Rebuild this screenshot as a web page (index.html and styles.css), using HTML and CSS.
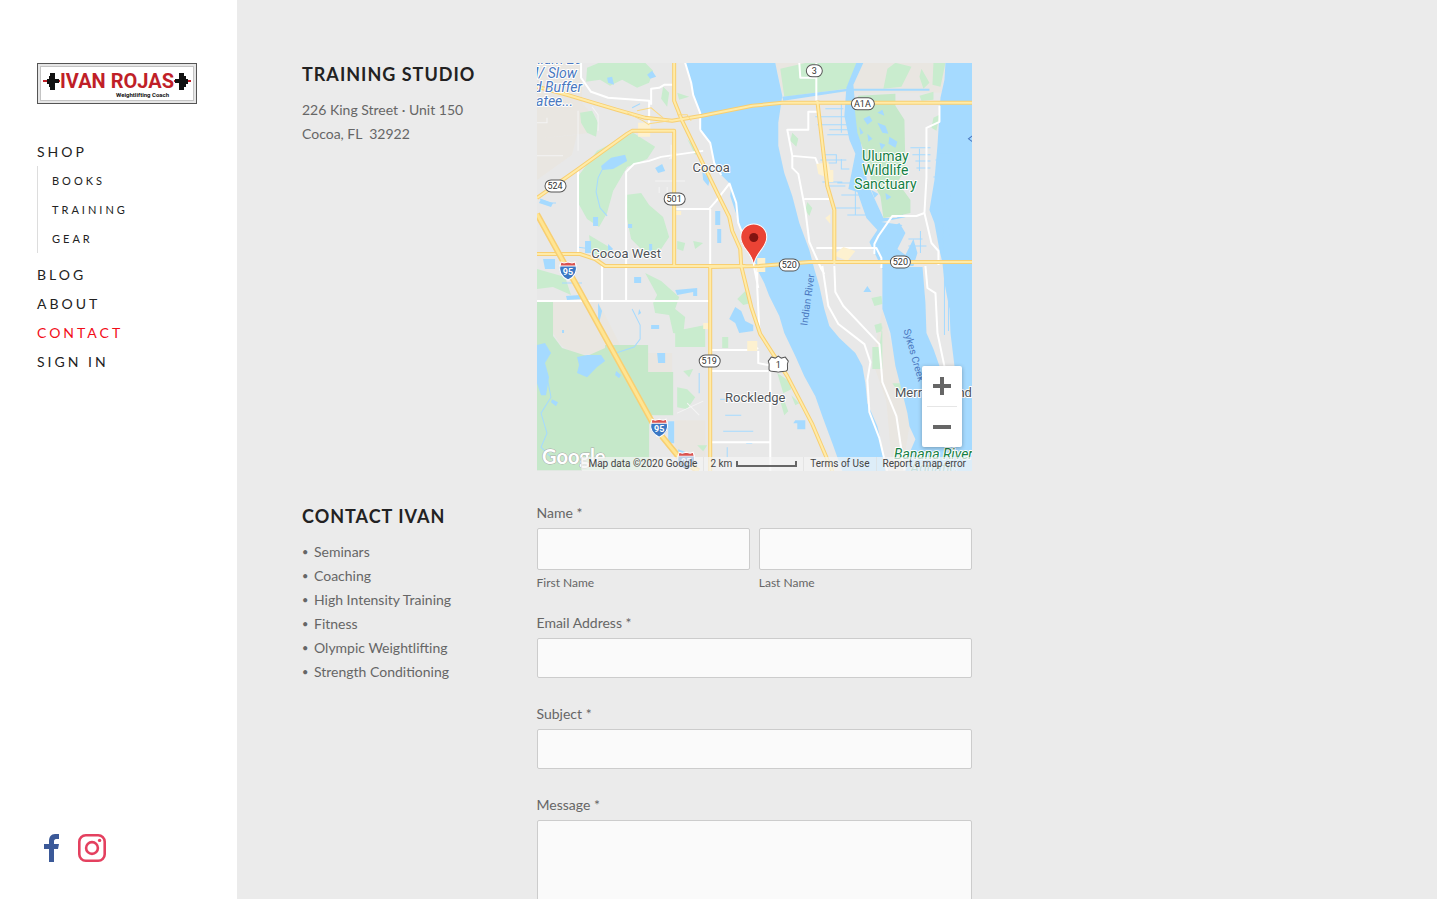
FILE: index.html
```html
<!DOCTYPE html>
<html lang="en">
<head>
  <meta charset="UTF-8">
  <meta name="viewport" content="width=device-width, initial-scale=1.0">
  <title>Contact - Ivan Rojas Weightlifting Coach</title>
  <link rel="stylesheet" href="styles.css">
</head>
<body>
  <header class="sidebar">
    <a href="#" class="logo" aria-label="Ivan Rojas Weightlifting Coach">
      <svg viewBox="0 0 160 41">
        <rect x="0.5" y="0.5" width="159" height="40" fill="#e6e6e6" stroke="#555"/>
        <rect x="3.5" y="3.5" width="153" height="34" fill="#fff" stroke="#c4c4c4"/>
        <path d="M6 18h17M137 18h17" stroke="#c01f28" stroke-width="2"/>
        <path d="M10 16h2v5h-2zM12 13h2v11h-2zM13 10h5v17h-5zM17 16h5v4h-5zM138 16h5v4h-5zM142 10h5v17h-5zM146 13h3v11h-3zM149 16h2v5h-2z" fill="#111"/>
        <text x="23" y="25" class="logo-name">IVAN ROJAS</text>
        <text x="79" y="34" class="logo-tag">Weightlifting Coach</text>
      </svg>
    </a>
    <nav>
      <ul class="menu">
        <li><a href="#">Shop</a>
          <ul class="submenu">
            <li><a href="#">Books</a></li>
            <li><a href="#">Training</a></li>
            <li><a href="#">Gear</a></li>
          </ul>
        </li>
        <li><a href="#">Blog</a></li>
        <li><a href="#">About</a></li>
        <li><a href="#" class="active">Contact</a></li>
        <li><a href="#">Sign In</a></li>
      </ul>
    </nav>
    <div class="social">
      <a href="#" aria-label="Facebook">
        <svg width="28" height="28" viewBox="0 0 28 28"><path d="M12 28V15H7v-5h5V7c0-4 2-7 6-7h4v5h-3c-1 0-2 1-2 2v3h5l-1 5h-4v13z" fill="#3b5998"/></svg>
      </a>
      <a href="#" aria-label="Instagram">
        <svg width="28" height="28" viewBox="0 0 28 28" fill="none" stroke="#e4405f" stroke-width="2.6"><rect x="1.3" y="1.3" width="25.4" height="25.4" rx="6.5"/><circle cx="14" cy="14" r="5.9"/><circle cx="21.6" cy="6.4" r="1.7" fill="#e4405f" stroke="none"/></svg>
      </a>
    </div>
  </header>

  <main>
    <div class="content">
      <section>
        <h2>Training Studio</h2>
        <p>226 King Street · Unit 150<br>Cocoa, FL&nbsp; 32922</p>
      </section>

      <div class="map">
        <svg class="map-canvas" viewBox="0 0 435 408" preserveAspectRatio="xMidYMid slice">
          <rect width="435" height="408" fill="#e8e8e8"/>
          <!-- bare land -->
          <g fill="#e9e6e1">
            <path d="M0 0h45v40l10 12v18L0 76zM0 76l40-4-5 20-35 25zM16 238l45 0 22 44-15 8-30 2-14-10-8-12zM238 0h170l-4 30H245zM111 290h24v26h-24zM138 357h30v40h-30zM345 246l28 110-8 52h-10l-6-70-14-40z"/>
          </g>
          <!-- parks and woods -->
          <g fill="#c9ecce">
            <path d="M50 5l12-5h46l8 8-4 12-12 5-15-8-12 6-10-6-14 2zM43 50l12-2 6 12-2 14-9-4-6-10zM60 88l36-18 22 14-8 12-20 8-14 24-6 22-8 14-12-8-10-18 2-26zM88 132l16-2 8 12 14 12 6 20-8 12-14 6-16-16-4-20zM126 24l6 6-2 14-6-8zM140 30l12 4-10 3zM150 76l12 14-4 2zM52 172l20 12-4 10-14-4zM140 178l8 2-2 8-6-2zM0 206l28 8 6 18-18-8-16 2zM108 210l16 8 18 16-4 12 10 8-2 18-10-2-4-18-14-2-2-10 4-8zM138 268l30-6v22h-30zM140 324l10 2 8 8-8 12-10-2zM160 382h10l-4 6zM185 274h6v11h-6zM146 308l10-2-4 8zM156 178l10 2-8 6z"/>
            <path d="M243 6l26-6h54l-14 26-62 8zM350 6l8-6 16 4-10 20-18 2zM384 6l8 14-6 6-4-12zM396 0h12l-5 24-8-2zM255 70l6 6-2 8-6-6zM270 139l5 6-3 8-4-6zM334 235l10-2 1 8-8 2zM337 262l7-2 1 8-6 2zM335 284v22h10v-44l-3 22zM240 310l12 8 2 8-8 4zM245 332l6 16-4 4-4-14zM382 33l14-4v8l-12 1zM396 55l6-3-3 16-5-3zM355 320l8 0 2 10-6-4zM200 236l8-8 6 12-8 2zM254 332l8 8-4 2z"/>
          </g>
          <path d="M0 239h16v34l9 12 25 8 18-8v-3h43v27h25v43h-24v55H0z" fill="#c5e8c9"/>
          <!-- rivers -->
          <g class="water">
            <path d="M148 0l6 20 2 12 7 18v17l10 13 3 17 6 13 12 12-1 11 9 27 6 20 7 17 12 23 5 13 10 20 5 17 11 23 9 20 11 20 7 20 10 27 10 28h43l-5-32-3-13-10-23-2-20-3-17-7-13-16-15-10-12-5-17-5-23-5-17-5-19-10-27-7-27-8-23-6-27V60l4-27-5-23-2-10z"/>
            <path d="M408 0l-1 17-4 18-3 48-3 34-5 30 5 13 5 27 3 13 2 20 5 26 1 24 4 33 5 20-3 30v55h16V0z"/>
            <path d="M345 203v43l8 24 5 33 7 27 5 20 2 13 6 13-6 14-4 18h67v-30l-27-20-6-55-6-17-7-16-1-30-3-37z"/>
            <path d="M319 0h7l-10 22 2 22 12 76 16 35h13l6-4 6 7v24l8 16v8h-34l-13-27 8-12-11-12-9-26-9-3 7-35-6-14-5-24 2-28z"/>
            <path d="M245 34l65-8h82v2h-80l-66 10z"/>
          </g>
          <path d="M317 43l4-10 37-2v12l9 14 1 50-8 12 13 18v13l-14 3-13 2-3-22-9-15-6-25-8-23z" fill="#c5e8c9"/>
          <g class="water">
            <path d="M326 56l6-3 3 5-5 4zM340 60l8 3 3 8-6-1zM330 71l5 5-4 3zM352 74l8 5-2 6-7-4zM322 64l4 6-3 2zM342 80l6 2-4 5zM334 127l7 4-4 4zM348 130l6 4-5 3zM340 50l5-3 2 6z"/>
          </g>
          <path d="M344 159l21 3-14 14 3 28h35l-8-24 3-24-10-3z" fill="#e8e8e8"/>
          <path d="M350 166l12-6 6 10-8 16 8 6 8-16 4 14-4 13h-22l-6-18z" class="water"/>
          <!-- lakes -->
          <g class="water">
            <path d="M64 103l10-8 14-3 2 6-14 8-11 1zM70 15l5-1 2 8-6-2zM110 12l5-4 4 6-6 2zM118 105l7-4 3 7-7 2zM165 108l8 8-2 7-5-6zM178 148h5v14h-5zM180 166h4v14h-4zM4 136l12 4-2 4-12-4zM6 196h12v10H8zM48 178h6v12h-6zM56 154h5v9h-5zM91 161h4v4h-4zM112 181h3v8h-3zM40 294l10-2 14 0 4 6-8 6-10 10-10-4 2-8zM79 308l5 4-2 3-4-3zM0 282l8-2 6 10-6 10 4 14-3 18H4L0 320zM15 336l6 3-2 4-5-4zM120 290h8v10h-7zM131 358h6v22h-6zM97 214h7v6h-7zM138 227l22-2v8h-4v-4l-16 3zM114 262h8v4h-8zM198 244l6 4 4 10 8 4v6l-14 2-4-10-6-4zM61 240l4 8-4 16zM102 246l2 4-3 2zM330 223l4 6h-8zM258 357h10v9h-8v-6h-4zM25 267h2v3h-2zM141 386l8 3v8h-8zM29 233l14-1 1 4-14 1zM71 181l5 5-5 4z"/>
          </g>
          <g class="creek">
            <path d="M67 103l-6 12-2 14 4 16 7 8M3 136l10 4 6 0M95 246l8 16 0 14-6 8-18 6M10 314l4 20-10 16 6 20-6 14 10 10M95 45l8-4M40 184l14 2M25 220h20"/>
            <path d="M288 46h18M278 54h31M280 62h30M292 67h22M290 72h25M304 40v30M283 97h26M285 92h14v8h-10v8M304 96v10h8M300 120h20M304 132h20M295 145h28M318 124v28M310 152h20M285 119h20M288 123h20"/>
            <path d="M373 85h20M375 92h18M378 98h15M379 105h14M382 86v22M400 90h12M398 97h16M396 114h26M397 121h12M395 133h18M395 140h12M398 147h14M399 155h13M401 165h10M402 172h10M406 161v30M371 176h14M371 183h18M383 168v22"/>
            <path d="M407 208v64M411 222v46M183 336h20M186 368h30M188 352h16M190 384v10M209 380h6M162 310v20"/>
          </g>
          <!-- local streets -->
          <g class="street">
            <path d="M44 0v15l10 14 17 6 41 3v28M114 42V26l8-1 5-3h10M41 107v84M89 204v-95l8-8 15-3 12-4 42-6M89 112v90M173 146v57M139 146h33l7-8 13-17M0 238h173M65 203v34M89 203v34M173 287h42l6-2M173 308h58M233 308v100M173 379h60M221 288v12l10 2h10M192 120l7 20 2 20 10 25 8 20M163 67l10 13 4 20 7 12M148 0l6 20 2 12 7 18v17M220 205v20l2 40M217 205l4 20"/>
            <path d="M279 0v38M262 0l1 15h16M280 49h-9v18h-21l5 26 0 12 6 6 7 36 4 32 12 27 3 5M255 93l23 2 4 10 8 3M267 136h25M279 185h60l5 10v10M402 43v16l-13 6v50l-2 35-8 3-24 0-14 20-4 8v10M387 150l7 30 7 8v14M285 203l6 40 10 18 26 20 6 18-3 18 2 32 10 26 8 34M297 203l1 26 8 14 36 38 3 38 14 34 8 54M388 203l2 22 8 5 2 40 8 38"/>
            <path d="M0 60h10v-5M41 48v40M55 44l6 8v16M118 118h30M122 124v6M130 124v8M0 93h26M140 350l26-12M150 340l12 12M134 82v14M140 90l-8 6" class="lane"/>
          </g>
          <g fill="#fdf1d0">
            <path d="M101 60h12v14h-12zM279 101l12-2 4 18-14-6zM291 107h5v12h-6zM136 148h8v4h-8zM288 155l5-4v10zM220 195h8v14h-8zM296 192l10-8 12 4-8 10zM166 260h8v6h-8zM210 278h10v10h-10z"/>
          </g>
          <!-- highways -->
          <g class="road-edge">
            <path d="M0 135l40-28 50-36 5-3h42v135M173 204v204"/>
            <path d="M137 0v38l8 20 35 72 12 24 3 14 8 18 1 17M204 203l10 41 9 27 27 42 25 48 20 47"/>
            <path d="M0 191h43l15 5 10 7h140M172 204l50-1 50-4h163"/>
            <path d="M280 38l10 85 7 24v54"/>
            <path d="M0 24l30 8 50 15 28 8 27 3 30-5 50-10 30-3h220"/>
          </g>
          <g class="road">
            <path d="M0 135l40-28 50-36 5-3h42v135M173 204v204"/>
            <path d="M137 0v38l8 20 35 72 12 24 3 14 8 18 1 17M204 203l10 41 9 27 27 42 25 48 20 47"/>
            <path d="M0 191h43l15 5 10 7h140M172 204l50-1 50-4h163"/>
            <path d="M280 38l10 85 7 24v54"/>
            <path d="M0 24l30 8 50 15 28 8 27 3 30-5 50-10 30-3h220"/>
          </g>
          <path d="M90 50l16 8 6 4M100 48l14-3 12 10M112 61l20-3M140 52l10 0 4 6" class="ramp"/>
          <path d="M0 151l31 56 88 159 22 27 20 15" class="freeway-edge"/>
          <path d="M0 151l31 56 88 159 22 27 20 15" class="freeway"/>
          <!-- route shields -->
          <g class="shield">
            <rect x="8" y="117" width="21" height="12" rx="6"/><text x="18" y="126">524</text>
            <rect x="127" y="130" width="21" height="12" rx="6"/><text x="137" y="139">501</text>
            <rect x="269" y="2" width="16" height="12" rx="6"/><text x="277" y="11">3</text>
            <rect x="314" y="35" width="23" height="12" rx="6"/><text x="325" y="44">A1A</text>
            <rect x="242" y="196" width="20" height="12" rx="6"/><text x="252" y="205">520</text>
            <rect x="353" y="193" width="20" height="12" rx="6"/><text x="363" y="202">520</text>
            <rect x="162" y="292" width="21" height="12" rx="6"/><text x="172" y="301">519</text>
            <path d="M234 294l4 1 3-2 3 2 4-1 3 4c-2 4 0 6-1 9-1 2-5 1-9 2-4-1-8 0-9-2-1-3 1-5-1-9z"/><text x="241" y="305">1</text>
          </g>
          <g class="interstate">
            <path d="M23 202h16c2 8-2 12-8 15-6-3-10-7-8-15z"/><path d="M24 199l3 1 4-1 4 1 3-1 1 4H23z" class="crest"/><text x="31" y="212">95</text>
            <path d="M114 359h16c2 8-2 12-8 15-6-3-10-7-8-15z"/><path d="M115 356l3 1 4-1 4 1 3-1 1 4h-16z" class="crest"/><text x="122" y="369">95</text>
            <path d="M141 392h16c2 8-2 12-8 15-6-3-10-7-8-15z"/><path d="M142 389l3 1 4-1 4 1 3-1 1 4h-16z" class="crest"/><text x="149" y="402">95</text>
          </g>
          <!-- place names -->
          <g class="place">
            <text x="174" y="109">Cocoa</text>
            <text x="89" y="195">Cocoa West</text>
            <text x="218" y="339">Rockledge</text>
            <text x="396" y="334">Merritt Island</text>
          </g>
          <g class="park-name">
            <text x="348" y="98">Ulumay</text>
            <text x="348" y="112">Wildlife</text>
            <text x="348" y="126">Sanctuary</text>
            <text x="396" y="396" class="aquatic">Banana River</text>
            <text x="396" y="410" class="aquatic faded">Aquatic</text>
          </g>
          <g class="water-name large">
            <text x="45" y="1">nium 20</text>
            <text x="40" y="15">M/ Slow</text>
            <text x="45" y="29">nd Buffer</text>
            <text x="36" y="43">Catee...</text>
          </g>
          <g class="water-name">
            <text transform="translate(270 263) rotate(-82)">Indian River</text>
            <text transform="translate(366 267) rotate(74)">Sykes Creek</text>
          </g>
          <path d="M435 73l-4 3 4 3" fill="none" stroke="#4a78c0"/>
          <!-- marker -->
          <path d="M216.500 203c-1-14-13-17-13-29a13 13 0 0 1 26 0c0 12-12 15-13 29z" fill="#ea4335" stroke="#fff" stroke-width="1"/>
          <circle cx="216.500" cy="174.500" r="4.500" fill="#811411"/>
          <text x="5" y="401" class="google">Google</text>
        </svg>
        <div class="zoom">
          <button type="button" aria-label="Zoom in"><svg width="18" height="18" viewBox="0 0 18 18"><path d="M7 0h4v7h7v4h-7v7H7v-7H0V7h7z"/></svg></button>
          <button type="button" aria-label="Zoom out"><svg width="18" height="18" viewBox="0 0 18 18"><path d="M0 7h18v4H0z"/></svg></button>
        </div>
        <div class="credits">
          <span>Map data ©2020 Google</span>
          <span class="scale">2 km <i></i></span>
          <a href="#">Terms of Use</a>
          <a href="#">Report a map error</a>
        </div>
      </div>

      <section>
        <h2>Contact Ivan</h2>
        <ul class="services">
          <li>Seminars</li>
          <li>Coaching</li>
          <li>High Intensity Training</li>
          <li>Fitness</li>
          <li>Olympic Weightlifting</li>
          <li>Strength Conditioning</li>
        </ul>
      </section>

      <form>
        <fieldset class="name-group">
          <legend>Name *</legend>
          <div class="names">
            <div class="name">
              <input type="text" id="fname">
              <label for="fname">First Name</label>
            </div>
            <div class="name">
              <input type="text" id="lname">
              <label for="lname">Last Name</label>
            </div>
          </div>
        </fieldset>
        <div class="field">
          <label for="email">Email Address *</label>
          <input type="email" id="email">
        </div>
        <div class="field">
          <label for="subject">Subject *</label>
          <input type="text" id="subject">
        </div>
        <div class="field">
          <label for="message">Message *</label>
          <textarea id="message" rows="5"></textarea>
        </div>
      </form>
    </div>
  </main>
</body>
</html>
```
FILE: styles.css
```css
* {
  box-sizing: border-box;
}
body {
  display: flex;
  height: 100vh;
  margin: 0;
  font-family: Lato, "Liberation Sans", sans-serif;
  font-size: 14px;
  line-height: 24px;
  color: #666;
  background-color: #ebebeb;
}
a {
  color: inherit;
  text-decoration: none;
}
ul {
  list-style: none;
  margin: 0;
  padding: 0;
}

/* sidebar */
.sidebar {
  display: flex;
  flex-direction: column;
  flex: 0 0 237px;
  padding: 63px 37px 37px;
  background-color: #fff;
}
.logo {
  margin-bottom: 33px;
  width: 160px;
}
.logo svg {
  display: block;
}
.logo-name {
  font: bold 20px Roboto, sans-serif;
  fill: #c01f28;
}
.logo-tag {
  font: bold 6px Roboto, sans-serif;
  fill: #111;
}
.menu a {
  display: block;
  font-size: 14px;
  line-height: 29px;
  letter-spacing: 3px;
  text-transform: uppercase;
  color: #222;
}
.menu a.active {
  color: #f20d18;
}
.submenu {
  margin-bottom: 7px;
  padding-left: 14px;
  border-left: 1px solid #ddd;
}
.menu .submenu a {
  font-size: 11px;
}
.social {
  display: flex;
  gap: 13px;
  margin-top: auto;
}
.social svg {
  display: block;
}

/* content */
main {
  flex: 1;
  overflow-y: auto;
  scrollbar-width: none;
  padding: 63px 65px;
}
.content {
  display: grid;
  grid-template-columns: 35fr 65fr;
  row-gap: 34px;
  max-width: 670px;
}
h2 {
  margin: 0 0 13px;
  font-size: 18px;
  line-height: 22px;
  letter-spacing: 1px;
  text-transform: uppercase;
  color: #222;
}
p {
  margin: 0;
}
.services li {
  display: flex;
}
.services li::before {
  content: "•";
  width: 12px;
  font-size: 11px;
}

/* map */
.map {
  position: relative;
  height: 408px;
  overflow: hidden;
  font-family: Roboto, sans-serif;
}
.map-canvas {
  display: block;
  width: 100%;
  height: 100%;
}
.water {
  fill: #a5daff;
}
.creek {
  fill: none;
  stroke: #a5daff;
  stroke-width: 1;
}
.street {
  fill: none;
  stroke: #fff;
  stroke-width: 2;
  stroke-linejoin: round;
}
.lane {
  stroke: #f4f4f4;
  stroke-width: 1;
}
.road-edge {
  fill: none;
  stroke: #f8cf72;
  stroke-width: 4;
  stroke-linejoin: round;
}
.road {
  fill: none;
  stroke: #ffeba8;
  stroke-width: 2;
  stroke-linejoin: round;
}
.ramp {
  fill: none;
  stroke: #fbd983;
  stroke-width: 1;
}
.freeway-edge {
  fill: none;
  stroke: #f8cf72;
  stroke-width: 6;
}
.freeway {
  fill: none;
  stroke: #ffe592;
  stroke-width: 3;
}
.shield rect, .shield path {
  fill: #fff;
  stroke: #555;
  stroke-width: 1;
}
.shield text {
  font-size: 9px;
  text-anchor: middle;
  fill: #333;
}
.interstate path {
  fill: #3b78c4;
  stroke: #fff;
  stroke-width: 1;
}
.interstate .crest {
  fill: #d9534f;
}
.interstate text {
  font-size: 9px;
  font-weight: bold;
  text-anchor: middle;
  fill: #fff;
}
.place, .park-name {
  font-size: 13px;
  text-anchor: middle;
  fill: #4f5358;
  stroke: #fff;
  stroke-width: 2;
  stroke-linejoin: round;
  paint-order: stroke;
}
.park-name {
  font-size: 14px;
  fill: #168045;
}
.aquatic {
  font-style: italic;
}
.faded {
  opacity: 0.5;
}
.water-name {
  font-size: 10px;
  fill: #4a78c0;
}
.large {
  font-size: 14px;
  font-style: italic;
  text-anchor: end;
  stroke: #fff;
  stroke-width: 2;
  paint-order: stroke;
}
.google {
  font: bold 20px Lato, sans-serif;
  fill: #fff;
  stroke: #aaa;
  stroke-width: 1;
  paint-order: stroke;
}
.zoom {
  position: absolute;
  right: 10px;
  bottom: 24px;
  width: 40px;
  padding: 0 5px;
  background-color: #fff;
  border-radius: 2px;
  box-shadow: 0 1px 4px rgba(0, 0, 0, 0.3);
}
.zoom button {
  display: flex;
  align-items: center;
  justify-content: center;
  width: 100%;
  height: 40px;
  padding: 0;
  border: none;
  background: none;
  cursor: pointer;
}
.zoom button + button {
  height: 41px;
  border-top: 1px solid #e6e6e6;
}
.zoom path {
  fill: #666;
}
.credits {
  position: absolute;
  right: 0;
  bottom: 0;
  display: flex;
  font-size: 10px;
  line-height: 14px;
  white-space: nowrap;
  color: #444;
}
.credits > * {
  padding: 0 6px;
  background-color: rgba(245, 245, 245, 0.7);
  border-left: 1px solid rgba(220, 220, 220, 0.6);
}
.scale {
  display: flex;
  align-items: center;
  gap: 4px;
}
.scale i {
  width: 61px;
  height: 6px;
  border: 2px solid #666;
  border-top: none;
}

/* form */
fieldset {
  margin: 0 0 24px;
  padding: 0;
  border: none;
  min-width: 0;
}
legend, .field label {
  display: block;
  margin-bottom: 7px;
  padding: 0;
  line-height: 16px;
}
.names {
  display: grid;
  grid-template-columns: 1fr 1fr;
  gap: 9px;
}
.name label {
  display: block;
  margin-top: 5px;
  font-size: 12px;
  line-height: 16px;
}
input, textarea {
  display: block;
  width: 100%;
  height: 40px;
  padding: 12px;
  font: inherit;
  color: #333;
  background-color: #fafafa;
  border: 1px solid #ccc;
  border-radius: 2px;
}
.name input {
  height: 42px;
}
.field {
  margin-bottom: 28px;
}
textarea {
  height: 120px;
  resize: none;
}
```
